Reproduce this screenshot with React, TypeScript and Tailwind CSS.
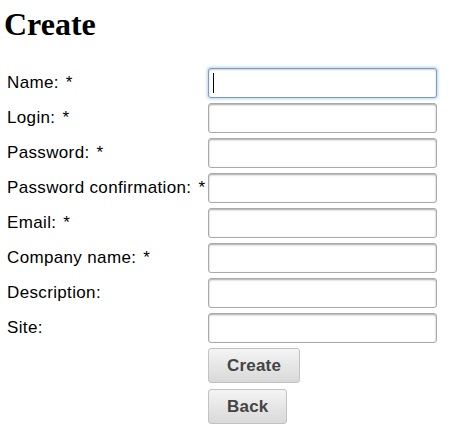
import React from 'react';

const fields = [
  { label: 'Name:', required: true },
  { label: 'Login:', required: true },
  { label: 'Password:', required: true },
  { label: 'Password confirmation:', required: true },
  { label: 'Email:', required: true },
  { label: 'Company name:', required: true },
  { label: 'Description:', required: false },
  { label: 'Site:', required: false },
];

function Field({ focused }: { focused?: boolean }) {
  if (focused) {
    return (
      <div className="relative h-[30px] w-[229px] rounded-[3px] border border-[#7d9fbd] bg-white shadow-[0_0_3px_1px_rgba(120,175,220,0.55),inset_0_1px_2px_rgba(0,0,0,0.2)]">
        <span className="absolute left-[4px] top-[4px] h-[20px] w-px bg-black" />
      </div>
    );
  }
  return (
    <input
      type="text"
      className="h-[30px] w-[229px] rounded-[3px] border border-[#aaaaaa] bg-white shadow-[inset_0_1px_2px_rgba(0,0,0,0.35)] outline-none"
    />
  );
}

function Btn({ children }: { children: React.ReactNode }) {
  return (
    <button className="h-[35px] rounded-[3px] border border-[#c2c2c2] bg-gradient-to-b from-[#f4f4f4] to-[#d9d9d9] px-[18px] text-[17px] font-bold tracking-[0.2px] text-[#444] [font-family:'Liberation_Sans',Arial,sans-serif]">
      {children}
    </button>
  );
}

export default function App() {
  return (
    <div className="h-[436px] w-[457px] bg-white text-black">
      <h1 className="pl-[4px] pt-[6px] text-[32px] font-bold leading-[36px] [font-family:'Liberation_Serif','Times_New_Roman',serif]">
        Create
      </h1>
      <div className="mt-[26px] grid grid-cols-[201px_auto] gap-y-[5px] pl-[7px] text-[17px] tracking-[0.35px] [font-family:'Liberation_Sans',Arial,sans-serif]">
        {fields.map((f, i) => (
          <React.Fragment key={f.label}>
            <div className="flex h-[30px] items-center whitespace-nowrap">
              <span>{f.label}</span>
              {f.required && <span className="ml-[7px]">*</span>}
            </div>
            <Field focused={i === 0} />
          </React.Fragment>
        ))}
        <div />
        <div className="flex flex-col items-start gap-[6px]">
          <Btn>Create</Btn>
          <Btn>Back</Btn>
        </div>
      </div>
    </div>
  );
}
